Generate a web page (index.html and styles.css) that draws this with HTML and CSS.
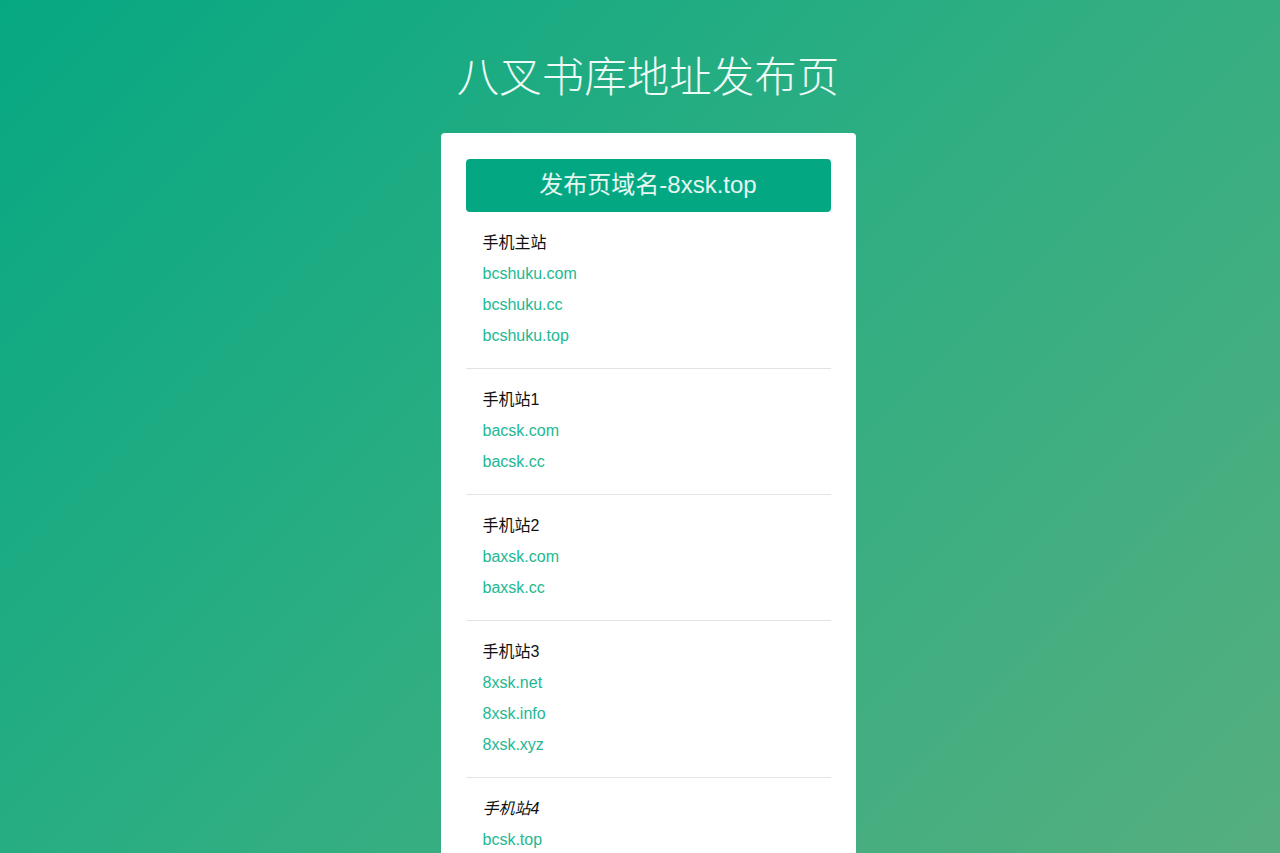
FILE: index.html
```html
<!DOCTYPE html>
<html lang="zh-CN">
<head>
<meta charset="utf-8">
<title>八叉书库地址发布页</title>
<link rel="stylesheet" href="styles.css">
</head>
<body>
<div class="page">
<h1 class="title">八叉书库地址发布页</h1>
<div class="card">
  <div class="card-head">发布页域名-8xsk.top</div>
  <div class="group">
    <div class="label">手机主站</div>
    <a class="link" href="#">bcshuku.com</a>
    <a class="link" href="#">bcshuku.cc</a>
    <a class="link" href="#">bcshuku.top</a>
  </div>
  <div class="group">
    <div class="label">手机站1</div>
    <a class="link" href="#">bacsk.com</a>
    <a class="link" href="#">bacsk.cc</a>
  </div>
  <div class="group">
    <div class="label">手机站2</div>
    <a class="link" href="#">baxsk.com</a>
    <a class="link" href="#">baxsk.cc</a>
  </div>
  <div class="group">
    <div class="label">手机站3</div>
    <a class="link" href="#">8xsk.net</a>
    <a class="link" href="#">8xsk.info</a>
    <a class="link" href="#">8xsk.xyz</a>
  </div>
  <div class="group">
    <div class="label italic">手机站4</div>
    <a class="link" href="#">bcsk.top</a>
  </div>
</div>
</div>
</body>
</html>
```
FILE: styles.css
```css
html, body {
  margin: 0;
  padding: 0;
}
body {
  min-height: 853px;
  background: linear-gradient(135deg, #06a882 0%, #2fae82 50%, #56ae7f 100%);
  background-attachment: fixed;
  font-family: "Liberation Sans", "Noto Sans CJK SC", sans-serif;
}
.page {
  padding-left: 16px;
}
.title {
  margin: 0 0 27px;
  padding-top: 50px;
  text-align: center;
  font-size: 42.5px;
  line-height: 56px;
  font-weight: 300;
  color: #eefaf5;
}
.card {
  width: 365px;
  margin: 0 auto;
  background: #fff;
  border-radius: 4px;
  padding: 26px 25px 25px;
  min-height: 800px;
}
.card-head {
  height: 53px;
  background: #03a883;
  border-radius: 4px;
  color: #e6f7f1;
  font-size: 24px;
  line-height: 52px;
  text-align: center;
  margin-bottom: 15px;
}
.group {
  display: flex;
  flex-direction: column;
  padding: 0 17px 17px;
  border-bottom: 1px solid #e3e3e3;
  margin-bottom: 15px;
}
.group:last-child {
  border-bottom: none;
}
.label {
  font-size: 16px;
  line-height: 31px;
  color: #111;
}
.label.italic {
  font-style: italic;
}
.link {
  font-size: 16px;
  line-height: 31px;
  color: #22b893;
  text-decoration: none;
}
```
